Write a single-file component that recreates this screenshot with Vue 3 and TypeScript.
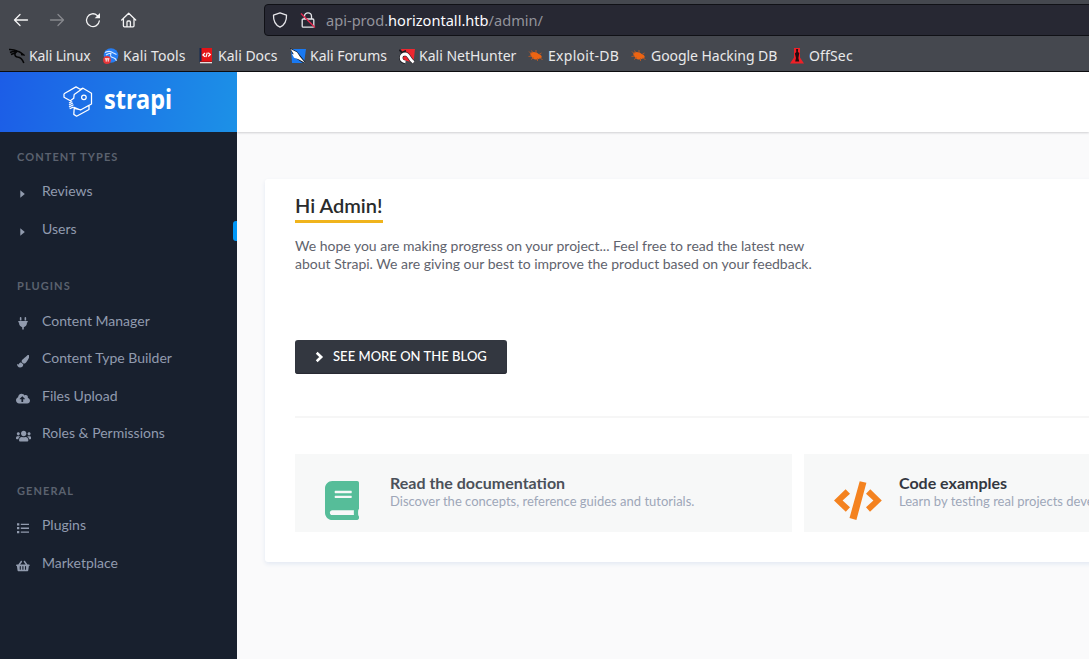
<script setup lang="ts">
interface MenuItem { label: string; icon: string; active?: boolean }
interface Section { title: string; items: MenuItem[] }
interface Glyph { w: number; h: number; box: string; d: string }

const glyphs: Record<string, Glyph> = {
  caret: { w: 5, h: 8, box: '0 0 5 8', d: 'M0.3 0.2 4.8 4 0.3 7.8z' },
  plug: { w: 10, h: 12.6, box: '0 0 384 512', d: 'M256 144V32c0-17.673 14.327-32 32-32s32 14.327 32 32v112h-64zm112 16H16c-8.837 0-16 7.163-16 16v32c0 8.837 7.163 16 16 16h16v32c0 77.406 54.969 141.971 128 156.796V512h64v-99.204c73.031-14.825 128-79.39 128-156.796v-32h16c8.837 0 16-7.163 16-16v-32c0-8.837-7.163-16-16-16zm-240-16V32c0-17.673-14.327-32-32-32S64 14.327 64 32v112h64z' },
  brush: { w: 12.5, h: 12.5, box: '0 0 512 512', d: 'M167.02 309.34c-40.12 2.58-76.53 17.86-97.19 72.3-2.35 6.21-8 9.98-14.59 9.98-11.11 0-45.46-27.67-55.25-34.35C0 439.62 37.93 512 128 512c75.86 0 128-43.77 128-120.19 0-3.11-.65-6.08-.97-9.13l-88.01-73.34zM457.89 0c-15.16 0-29.37 6.71-40.21 16.45C213.27 199.05 192 203.34 192 257.09c0 13.7 3.25 26.76 8.73 38.7l63.82 53.18c7.21 1.8 14.64 3.03 22.39 3.03 62.11 0 98.11-45.47 211.16-256.46 7.38-14.35 13.9-29.85 13.9-45.99C512 20.64 486 0 457.89 0z' },
  cloud: { w: 14, h: 11.2, box: '0 0 640 512', d: 'M537.6 226.6c4.1-10.7 6.4-22.4 6.4-34.6 0-53-43-96-96-96-19.7 0-38.1 6-53.3 16.2C367 64.2 315.3 32 256 32c-88.4 0-160 71.6-160 160 0 2.7.1 5.4.2 8.1C40.2 219.8 0 273.2 0 336c0 79.5 64.5 144 144 144h368c70.7 0 128-57.3 128-128 0-61.9-44-113.6-102.4-125.4zM393.4 288H328v112c0 8.8-7.2 16-16 16h-48c-8.8 0-16-7.2-16-16V288h-65.4c-14.3 0-21.4-17.2-11.3-27.3l105.4-105.4c6.2-6.2 16.4-6.2 22.6 0l105.4 105.4c10.1 10.1 2.9 27.3-11.3 27.3z' },
  users: { w: 15.4, h: 12.3, box: '0 0 640 512', d: 'M96 224c35.3 0 64-28.7 64-64s-28.7-64-64-64-64 28.7-64 64 28.7 64 64 64zm448 0c35.3 0 64-28.7 64-64s-28.7-64-64-64-64 28.7-64 64 28.7 64 64 64zm32 32h-64c-17.6 0-33.5 7.1-45.1 18.6 40.3 22.1 68.9 62 75.1 109.4h66c17.7 0 32-14.3 32-32v-32c0-35.3-28.7-64-64-64zm-256 0c61.9 0 112-50.1 112-112S381.9 32 320 32 208 82.1 208 144s50.1 112 112 112zm76.8 32h-8.3c-20.8 10-43.9 16-68.5 16s-47.6-6-68.5-16h-8.3C179.6 288 128 339.6 128 403.2V432c0 26.5 21.5 48 48 48h288c26.5 0 48-21.5 48-48v-28.8c0-63.6-51.6-115.2-115.2-115.2zm-223.7-13.4C161.5 263.1 145.6 256 128 256H64c-35.3 0-64 28.7-64 64v32c0 17.7 14.3 32 32 32h65.9c6.3-47.4 34.9-87.3 75.2-109.4z' },
  list: { w: 12.5, h: 10.5, box: '0 0 12.5 10.5', d: 'M0 .2h2.3v2.2H0zM0 4.1h2.3v2.2H0zM0 8h2.3v2.2H0zM3.8 .7h8.6v1.4H3.8zM3.8 4.5h8.6v1.4H3.8zM3.8 8.4h8.6v1.4H3.8z' },
  basket: { w: 13.8, h: 12, box: '0 0 576 512', d: 'M576 216v16c0 13.255-10.745 24-24 24h-8l-26.113 182.788C514.509 462.435 494.257 480 470.37 480H105.63c-23.887 0-44.139-17.565-47.518-41.212L32 256h-8c-13.255 0-24-10.745-24-24v-16c0-13.255 10.745-24 24-24h67.341l106.78-146.821c10.395-14.292 30.407-17.453 44.701-7.058 14.293 10.395 17.453 30.408 7.058 44.701L170.477 192h235.046L326.12 82.821c-10.395-14.292-7.234-34.306 7.059-44.701 14.291-10.395 34.306-7.235 44.701 7.058L484.659 192H552c13.255 0 24 10.745 24 24zM312 392V280c0-13.255-10.745-24-24-24s-24 10.745-24 24v112c0 13.255 10.745 24 24 24s24-10.745 24-24zm112 0V280c0-13.255-10.745-24-24-24s-24 10.745-24 24v112c0 13.255 10.745 24 24 24s24-10.745 24-24zm-224 0V280c0-13.255-10.745-24-24-24s-24 10.745-24 24v112c0 13.255 10.745 24 24 24s24-10.745 24-24z' },
}

const sections: Section[] = [
  { title: 'Content types', items: [{ label: 'Reviews', icon: 'caret' }, { label: 'Users', icon: 'caret', active: true }] },
  {
    title: 'Plugins',
    items: [
      { label: 'Content Manager', icon: 'plug' },
      { label: 'Content Type Builder', icon: 'brush' },
      { label: 'Files Upload', icon: 'cloud' },
      { label: 'Roles & Permissions', icon: 'users' },
    ],
  },
  { title: 'General', items: [{ label: 'Plugins', icon: 'list' }, { label: 'Marketplace', icon: 'basket' }] },
]

const bookmarks = [
  { label: 'Kali Linux', kind: 'linux', width: 94, track: -0.15 },
  { label: 'Kali Tools', kind: 'tools', width: 95, track: 0.12 },
  { label: 'Kali Docs', kind: 'docs', width: 92, track: 0 },
  { label: 'Kali Forums', kind: 'forums', width: 109, track: -0.04 },
  { label: 'Kali NetHunter', kind: 'hunter', width: 129, track: 0 },
  { label: 'Exploit-DB', kind: 'bug', width: 103, track: 0.28 },
  { label: 'Google Hacking DB', kind: 'bug', width: 158, track: -0.05 },
  { label: 'OffSec', kind: 'offsec', width: 80, track: 0.15 },
]
</script>

<template>
  <div class="window">
    <header class="chrome">
      <div class="nav">
        <svg class="nav-icon" viewBox="0 0 16 16"><path d="M14.500 8H1.500M7 2.500 1.500 8 7 13.500" /></svg>
        <svg class="nav-icon dim" viewBox="0 0 16 16"><path d="M1.500 8h13M9 2.500 14.500 8 9 13.500" /></svg>
        <svg class="nav-icon" viewBox="0 0 16 16"><path d="M14.300 9A6.400 6.400 0 1 1 12.200 3.400l1.500 1.400" /><path class="solid" d="M15 1v5.300H9.700z" /></svg>
        <svg class="nav-icon" viewBox="0 0 16 16"><path d="M.7 8 7.700 1.300 14.700 8M2.400 6.700v7.100c0 .6.400 1 1 1H12c.6 0 1-.4 1-1V6.700M6 14.500V10c0-.6.400-1 1-1h1.400c.6 0 1 .4 1 1v4.500" /></svg>
        <div class="address">
          <svg class="addr-icon" viewBox="0 0 16 16"><path d="M8 .8 14.500 3.200c.2 5.200-1.600 9.600-6.500 12C3.100 12.800 1.300 8.400 1.500 3.200z" /></svg>
          <svg class="addr-icon lock" viewBox="0 0 16 16"><path d="M4.500 7V4.300a3.500 3.500 0 0 1 7 0V7M3.200 7h9.600c.6 0 1 .4 1 1v6.200c0 .6-.4 1-1 1H3.200c-.6 0-1-.4-1-1V8c0-.6.400-1 1-1z" /><path class="strike" d="M1 1.500 15 15.500" /></svg>
          <span class="url">api-prod.<b>horizontall.htb</b>/admin/</span>
        </div>
      </div>
      <div class="bookmarks">
        <div v-for="b in bookmarks" :key="b.label" class="bookmark" :style="{ width: b.width + 'px', letterSpacing: b.track + 'px' }">
          <svg class="fav" viewBox="0 0 16 16">
            <g v-if="b.kind === 'linux'" fill="none" stroke="#050506" stroke-width="1.500">
              <path d="M0 1.500c3 0 5-.2 8 1.500M1 4.500c3-1.500 5-1.500 7.500-1.300 2 .2 3 1.300 4.500 2.300l1.500 1.200-2.500-.3M8 3.500C5 5 5.300 8.500 8.500 9c3.500.3 5 2.500 6.300 6M2 6.500l4-1.500" />
            </g>
            <g v-else-if="b.kind === 'tools'">
              <circle cx="8" cy="7.500" r="7.300" fill="#267df3" />
              <path d="M2 4.500c3-1.500 6-1.300 8 .3l3.500 1.700M3 7c2-1.500 3.500-2 5.500-1.700M8 5.500c-1.500 3 .5 4 2.500 4.300 2 .5 2.500 1.700 3 3" fill="none" stroke="#d8e8ff" stroke-width="1.100" />
              <circle cx="4" cy="12" r="3.900" fill="#e63538" />
              <path d="M1.900 10.800h4.500M3.200 11v2.600M5.200 11v2.600" stroke="#fff" fill="none" />
            </g>
            <g v-else-if="b.kind === 'docs'">
              <path fill="#e51317" d="M3 0h11v13.500H3z" /><path fill="#152a52" d="M1.500 0H3.500v14H1.500z" />
              <path fill="#e9dede" d="M2 14h12v1.300H2z" /><path fill="#b80e12" d="M2 13.200h12v.8H2z" />
              <path d="M7 5 4.900 7 7 8.700M10.200 4.800 12.300 6.500l-2.100 2M9.300 4.600 7.900 9.200" fill="none" stroke="#fff" stroke-width="1.200" />
            </g>
            <g v-else-if="b.kind === 'forums'">
              <path fill="#1979f2" d="M1 1h15l-2 14H2z" />
              <path fill="#17191e" d="M0 0 7 3.500 15.500 14 13 15 4 9z" /><path fill="#fff" d="M.5 1 7 4.200l3 4.500 5 6-6.500-3.400-4.500-1.500L2 6l1.800.2z" />
            </g>
            <g v-else-if="b.kind === 'hunter'">
              <path fill="#ee2730" d="M2 1h14l-1.500 13.500L4 12z" />
              <path d="M.3 1.800 3 4.500l4-1.800" fill="none" stroke="#191a20" stroke-width="1.800" />
              <path d="M6 14C.5 13 1 6 6.300 6c4 .2 3.200 4.500 8.300 8.300" fill="none" stroke="#191a20" stroke-width="3.900" />
              <path d="M6.500 13.800C.5 13 1 6 6.300 6c4 .2 3.200 4.500 8.300 8.300" fill="none" stroke="#fff" stroke-width="2.800" />
            </g>
            <g v-else-if="b.kind === 'bug'">
              <path fill="#ed6412" d="M2.500 5C5 3.200 8.500 4 11 6.300c1.500.2 2.500 1.400 2.800 2.700-.7.900-1.300 1.600-2.300 1.600-3 1.800-6 .8-7.800-1.700-1.200-1-1.600-2.800-1.200-3.900z" />
              <path d="M3.500 6 1 3.500M5 5 3.500 2.500M8 5V2M11 6.500 13.500 5M4 8 .5 8.500M6 9.500l-3 2M9.500 10v3M12 9.500l2.500 2.500" fill="none" stroke="#ba5924" stroke-width=".9" />
            </g>
            <g v-else>
              <path fill="#ef2027" d="M5 0h6v9.500l4 6H1l4-6z" /><path fill="#240c10" d="M7.100 1h2l-.2 3 1.400 1-.9 5 .8 3.500H6.200l.8-3.500-1.100-4.500L7.300 4z" />
            </g>
          </svg>
          <span class="bm-label">{{ b.label }}</span>
        </div>
      </div>
    </header>

    <div class="app">
      <aside class="sidebar">
        <div class="brand">
          <svg class="brand-mark" viewBox="0 0 30 31">
            <path d="M1 7.700 13 .9 17.200 3.300 20 2.200 28.500 7.200V18L17.500 24 10.500 21.200M1 7.700v3.500l6.300 3.600 3.400-2.500.5-3.800L20 2.200M11.200 22.300 18 23.800l8-4.500v4.200L13.600 30.200l-2.800-1.800zM6 17l3.200-1.500M6 19l3.800-2M6 21l4.500-2.200M6.700 22.700l3.500-1.600" />
            <circle cx="20.900" cy="11.300" r="2.300" />
          </svg>
          <span class="brand-name">strapi</span>
        </div>
        <nav class="menu">
          <section v-for="s in sections" :key="s.title" class="section">
            <h2 class="section-title">{{ s.title }}</h2>
            <div v-for="item in s.items" :key="item.label" class="item" :class="{ active: item.active }">
              <span class="item-icon" :class="item.icon">
                <svg :width="glyphs[item.icon].w" :height="glyphs[item.icon].h" :viewBox="glyphs[item.icon].box"><path :d="glyphs[item.icon].d" /></svg>
              </span>
              <span class="item-label">{{ item.label }}</span>
            </div>
          </section>
        </nav>
      </aside>

      <div class="content">
        <div class="topbar"></div>
        <main class="card">
          <h1 class="greeting">Hi Admin!</h1>
          <p class="intro">We hope you are making progress on your project... Feel free to read the latest new<br>about Strapi. We are giving our best to improve the product based on your feedback.</p>
          <button class="blog" type="button">
            <svg width="9" height="12" viewBox="0 0 9 12"><path d="M1.700 1.700 6.200 6l-4.500 4.300" /></svg>
            <span>See more on the blog</span>
          </button>
          <hr class="rule">
          <div class="links">
            <div class="link">
              <span class="link-icon">
                <svg class="book" viewBox="0 0 448 512"><path fill="#56bd99" d="M448 360V24c0-13.300-10.700-24-24-24H96C43 0 0 43 0 96v320c0 53 43 96 96 96h328c13.300 0 24-10.700 24-24v-16c0-7.500-3.500-14.300-8.900-18.700-4.200-15.400-4.200-59.300 0-74.700 5.400-4.300 8.900-11.100 8.900-18.600zM128 134c0-3.300 2.700-6 6-6h212c3.300 0 6 2.700 6 6v20c0 3.300-2.700 6-6 6H134c-3.300 0-6-2.700-6-6v-20zm0 64c0-3.300 2.700-6 6-6h212c3.300 0 6 2.700 6 6v20c0 3.300-2.700 6-6 6H134c-3.300 0-6-2.700-6-6v-20zm253.400 250H96c-17.700 0-32-14.300-32-32 0-17.600 14.400-32 32-32h285.400c-1.900 17.100-1.900 46.900 0 64z" /></svg>
              </span>
              <div><h3 class="link-title soft">Read the documentation</h3><p class="link-text">Discover the concepts, reference guides and tutorials.</p></div>
            </div>
            <div class="link">
              <span class="link-icon">
                <svg class="code" viewBox="0 0 48 39"><path fill="#f4821f" d="M0 19.500 11.600 8.300 16 12.700 8.600 19.500l7.400 6.700-4.200 4.600zM25.700.3 32.400 1.800 22.400 39 15.500 37zM36.300 8.300 47.800 19.500 36 30.800l-4-4.600 7.400-6.700-7.400-6.800z" /></svg>
              </span>
              <div><h3 class="link-title">Code examples</h3><p class="link-text">Learn by testing real projects developed by the community.</p></div>
            </div>
          </div>
        </main>
      </div>
    </div>
  </div>
</template>

<style>
html, body { margin: 0; overflow: hidden; }
</style>

<style scoped>
.window { width: 1089px; height: 659px; overflow: hidden; display: flex; flex-direction: column; font-family: Lato, sans-serif; }
.chrome { box-sizing: border-box; height: 72px; flex: none; background: #45484f; border-bottom: 1px solid #0c0c0f; font-family: "Noto Sans", sans-serif; color: #e9e9ea; }
.nav { display: flex; align-items: center; height: 40px; padding-left: 13px; gap: 20px; }
.nav-icon { width: 16px; height: 16px; flex: none; fill: none; stroke: #f4f4f5; stroke-width: 1.300; stroke-linecap: round; stroke-linejoin: round; }
.nav-icon .solid { fill: #f4f4f5; stroke: none; }
.dim { stroke: #86888d; }
.address { box-sizing: border-box; flex: none; margin-left: 107px; width: 900px; height: 32px; display: flex; align-items: center; background: #272833; border: 1px solid #101116; border-radius: 4px; padding-left: 7px; color: #92939b; font-size: 14.600px; }
.addr-icon { width: 16px; height: 16px; flex: none; fill: none; stroke: #e6e6ea; stroke-width: 1.300; stroke-linejoin: round; }
.lock { margin-left: 12px; }
.strike { stroke: #e22850; stroke-width: 1.400; }
.url { margin-left: 10px; white-space: nowrap; }
.url b { font-weight: 400; color: #fbfbfe; }
.bookmarks { display: flex; height: 31px; padding-left: 9px; align-items: center; }
.bookmark { display: flex; flex: none; align-items: center; }
.fav { width: 16px; height: 16px; flex: none; }
.bm-label { margin-left: 4px; font-size: 14px; white-space: nowrap; }
.app { display: flex; flex: 1; min-height: 0; }
.sidebar { width: 237px; flex: none; background: #18202e; }
.brand { display: flex; align-items: center; height: 60px; background: linear-gradient(100deg, #1c5de7, #1c91e7); }
.brand-mark { width: 30px; height: 31px; margin-left: 63px; margin-top: -1px; flex: none; fill: none; stroke: #fff; stroke-width: 1.250; stroke-linejoin: round; }
.brand-name { margin-left: 11px; margin-top: -7px; color: #fff; font: 700 26px/32px "Noto Sans", sans-serif; transform: scaleX(.905); transform-origin: 0 50%; }
.menu { padding-top: 16px; }
.section { margin-bottom: 30.400px; }
.section-title { margin: 0 0 6px; padding-left: 17px; font-size: 11px; line-height: 18px; font-weight: 700; letter-spacing: 1.080px; text-transform: uppercase; color: #5b626f; }
.item { display: flex; align-items: center; height: 37.550px; color: #919bae; font-size: 14px; position: relative; }
.item-icon { display: flex; justify-content: center; align-items: center; width: 16px; margin-left: 15px; padding-top: 7px; }
.item-icon.caret { box-sizing: border-box; padding-right: 1px; }
.item-icon svg { display: block; flex: none; fill: #919bae; }
.item-icon.users { box-sizing: border-box; padding-left: 1px; }
.item-label { margin-left: 11px; white-space: nowrap; }
.active::after { content: ""; position: absolute; right: 0; top: 11px; width: 4px; height: 20px; background: #0097f7; border-radius: 3px 0 0 3px; }
.content { flex: 1; min-width: 0; background: #fafafb; overflow: hidden; }
.topbar { height: 60px; background: #fff; box-shadow: 0 1px 2px rgba(40, 42, 49, .2); }
.card { box-sizing: border-box; width: 1100px; height: 383px; margin: 47px 0 0 28px; padding: 15px 30px 0; background: #fff; border-radius: 3px; box-shadow: 0 2px 4px #e3e9f3; }
.greeting { width: 88px; margin: 0; height: 26px; border-bottom: 3px solid #f0b41c; font-size: 20px; line-height: 22px; font-weight: 600; color: #292b2c; white-space: nowrap; }
.intro { margin: 14px 0 0; font-size: 14px; line-height: 18px; color: #5f636d; white-space: nowrap; }
.blog { display: flex; align-items: center; width: 212px; height: 34px; margin-top: 67px; padding: 0 0 0 20px; border: 0; border-radius: 3px; background: #333740; box-shadow: inset 0 -1px 1px #272a32; color: #fff; font: 500 13px/18px Lato, sans-serif; text-transform: uppercase; white-space: nowrap; }
.blog svg { fill: none; stroke: #fff; stroke-width: 2.600; }
.blog span { margin-left: 9px; padding-bottom: 2px; letter-spacing: .03px; }
.rule { height: 2px; margin: 42px 0 36px; border: 0; background: #f6f6f6; }
.links { display: flex; gap: 12px; }
.link { box-sizing: border-box; width: 497px; height: 78px; flex: none; display: flex; padding: 20px 0 0 30px; background: #f7f8f8; }
.link-icon { width: 65px; flex: none; padding-top: 7px; }
.link-icon svg { display: block; }
.book { width: 34px; height: 39px; }
.code { width: 48px; height: 39px; }
.link-title { margin: 0; padding-bottom: 2px; font-size: 16px; line-height: 17px; font-weight: 700; color: #333740; white-space: nowrap; }
.soft { color: #4b515a; }
.link-text { margin: 0; font-size: 13px; line-height: 17px; color: #9ea7b8; white-space: nowrap; }
</style>
